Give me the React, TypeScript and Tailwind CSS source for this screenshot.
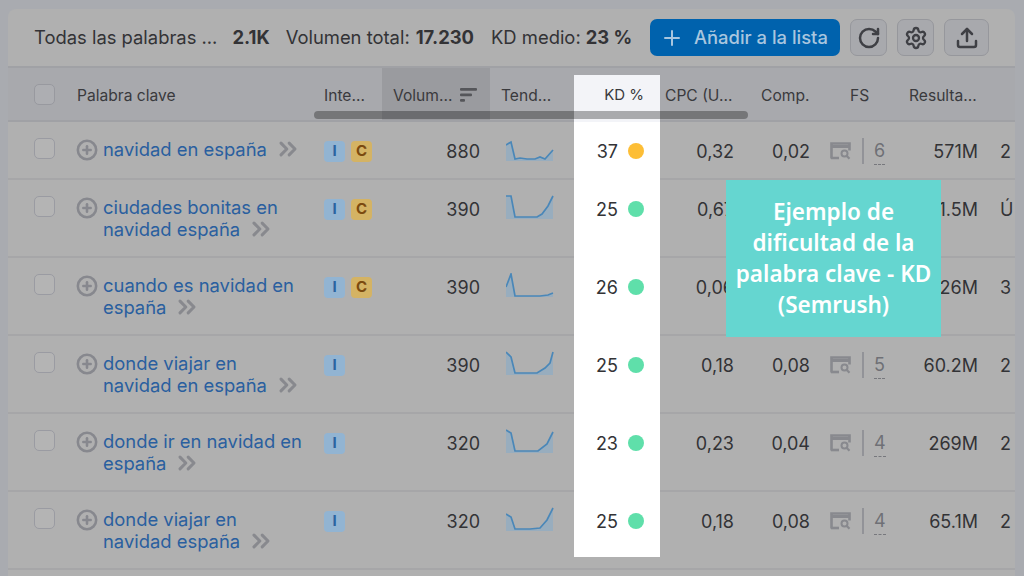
import { ChevronsRight, CirclePlus, Plus, RotateCw, Settings, Upload } from "lucide-react";

type Row = {
  lines: string[];
  intents: string[];
  volume: string;
  trend: string;
  kd: string;
  dot: string;
  cpc: string;
  comp: string;
  fs: string;
  results: string;
  last: string;
  tall: boolean;
  short?: boolean;
};

const rows: Row[] = [
  {
    lines: ["navidad en españa"],
    intents: ["I", "C"],
    volume: "880",
    trend: "0,8 5,5 9,22 14,21 21,22 29,22 34,20 39,22 47,13",
    kd: "37",
    dot: "bg-[#fdbe36]",
    cpc: "0,32",
    comp: "0,02",
    fs: "6",
    results: "571M",
    last: "2",
    tall: false,
  },
  {
    lines: ["ciudades bonitas en", "navidad españa"],
    intents: ["I", "C"],
    volume: "390",
    trend: "0,1 5,1 9,22 31,22 36,19 42,11 47,1",
    kd: "25",
    dot: "bg-[#5fdfaa]",
    cpc: "0,67",
    comp: "",
    fs: "",
    results: "21.5M",
    last: "Ú",
    tall: true,
  },
  {
    lines: ["cuando es navidad en", "españa"],
    intents: ["I", "C"],
    volume: "390",
    trend: "0,14 5,1 9,23 34,23 42,22 47,20",
    kd: "26",
    dot: "bg-[#5fdfaa]",
    cpc: "0,06",
    comp: "",
    fs: "",
    results: "126M",
    last: "3",
    tall: true,
  },
  {
    lines: ["donde viajar en", "navidad en españa"],
    intents: ["I"],
    volume: "390",
    trend: "0,1 5,6 9,22 31,22 39,17 44,12 47,1",
    kd: "25",
    dot: "bg-[#5fdfaa]",
    cpc: "0,18",
    comp: "0,08",
    fs: "5",
    results: "60.2M",
    last: "2",
    tall: true,
  },
  {
    lines: ["donde ir en navidad en", "españa"],
    intents: ["I"],
    volume: "320",
    trend: "0,1 5,4 9,22 32,22 41,15 47,3",
    kd: "23",
    dot: "bg-[#5fdfaa]",
    cpc: "0,23",
    comp: "0,04",
    fs: "4",
    results: "269M",
    last: "2",
    tall: true,
  },
  {
    lines: ["donde viajar en", "navidad españa"],
    intents: ["I"],
    volume: "320",
    trend: "0,7 5,10 9,22 24,22 34,21 41,13 47,1",
    kd: "25",
    dot: "bg-[#5fdfaa]",
    cpc: "0,18",
    comp: "0,08",
    fs: "4",
    results: "65.1M",
    last: "2",
    tall: true,
    short: true,
  },
];

function Checkbox() {
  return <div className="h-[21px] w-[21px] rounded-[5px] border border-[#9a9ba2] bg-[#b4b4b4]" />;
}

function Trend({ points }: { points: string }) {
  return (
    <svg width="48" height="24" viewBox="0 0 48 24" fill="none">
      <polygon points={`0,24 ${points} 47,24`} fill="#98adbe" />
      <polyline points={points} stroke="#4a87b8" strokeWidth="1.7" />
    </svg>
  );
}

function FsIcon() {
  return (
    <svg width="21" height="18" viewBox="0 0 21 18" fill="none">
      <path d="M1.5 16.5V1.5h18v7" stroke="#88898e" strokeWidth="2.6" />
      <path d="M1 4.5h19" stroke="#88898e" strokeWidth="3" />
      <path d="M1 16h8" stroke="#88898e" strokeWidth="2.6" />
      <circle cx="14.5" cy="11.5" r="3" stroke="#88898e" strokeWidth="2" />
      <path d="M16.8 14l2.7 2.7" stroke="#88898e" strokeWidth="2.2" />
    </svg>
  );
}

function KeywordRow({ row }: { row: Row }) {
  const last = row.lines.length - 1;
  return (
    <div
      className={`flex shrink-0 border-b-2 border-[#a6a6a8] ${row.tall ? "h-[78px]" : "h-[58px]"}`}
    >
      <div className="w-[69px] shrink-0 pl-[26px] pt-4">
        <Checkbox />
      </div>
      <div className="-ml-px flex w-[248px] shrink-0 pt-[17px]">
        <CirclePlus size={22} strokeWidth={2.8} className="mr-[5px] shrink-0 text-[#87888e]" />
        <div className="-mt-px text-[18.4px] leading-[22px] text-[#2a5f9f]">
          {row.lines.map((line, i) => (
            <div key={line} className="flex items-center whitespace-nowrap">
              {line}
              {i === last && (
                <ChevronsRight
                  size={28}
                  strokeWidth={2.6}
                  className="-my-[3px] ml-[7px] text-[#88898e]"
                />
              )}
            </div>
          ))}
        </div>
      </div>
      <div className="flex w-[58px] shrink-0 gap-[6px] pt-[19px]">
        {row.intents.map((intent) => (
          <div
            key={intent}
            className={`flex h-[21px] w-[21px] items-center justify-center rounded-[4px] text-[15px] font-bold ${
              intent === "I" ? "bg-[#92b4d2] text-[#2a64a0]" : "bg-[#d4b364] text-[#7b4a10]"
            }`}
          >
            {intent}
          </div>
        ))}
      </div>
      <div className="w-[108px] shrink-0 pr-[10px] pt-[19px] text-right text-[18px] leading-[22px] text-[#333336]">
        {row.volume}
      </div>
      <div className="w-[84px] shrink-0 pl-4 pt-[15px]">
        <Trend points={row.trend} />
      </div>
      <div
        className={`flex w-[86px] shrink-0 justify-end gap-[10px] bg-white pr-4 pt-[19px] ${
          row.short ? "h-[65px]" : "-mb-[2px]"
        }`}
      >
        <span className="text-[18px] leading-[22px] text-[#333336]">{row.kd}</span>
        <span className={`mt-[2px] h-4 w-4 rounded-full ${row.dot}`} />
      </div>
      <div className="w-[74px] shrink-0 pt-[19px] text-right text-[18px] leading-[22px] text-[#333336]">
        {row.cpc}
      </div>
      <div className="w-[76px] shrink-0 pt-[19px] text-right text-[18px] leading-[22px] text-[#333336]">
        {row.comp}
      </div>
      <div className="flex w-[80px] shrink-0 pl-[20px] pt-[16px]">
        <div className="mt-[4px]">
          <FsIcon />
        </div>
        <div className="ml-[11px] h-[26px] w-[2px] bg-[#929398]" />
        <span className="ml-[10px] h-[27px] border-b border-dashed border-[#77787d] text-[18px] leading-[26px] text-[#6f7076]">
          {row.fs}
        </span>
      </div>
      <div className="w-[88px] shrink-0 pt-[19px] text-right text-[18px] leading-[22px] text-[#333336]">
        {row.results}
      </div>
      <div className="w-[35px] shrink-0 overflow-hidden pl-[22px] pt-[19px] text-[18px] leading-[22px] text-[#333336]">
        {row.last}
      </div>
    </div>
  );
}

export default function App() {
  return (
    <div className="h-[576px] w-[1024px] overflow-hidden bg-[#a9abb0] pl-2 pr-[9px] pt-[9px] font-['Inter',sans-serif]">
      <div className="relative h-[567px] overflow-hidden rounded-t-[8px] bg-[#b0b0b0]">
        <div className="flex h-[57px] items-center pl-[26px] pr-[26px] text-[18.4px] text-[#333336]">
          <span>Todas las palabras ...</span>
          <span className="ml-[15px] font-bold">2.1K</span>
          <span className="ml-4">Volumen total:</span>
          <span className="ml-[6px] font-bold">17.230</span>
          <span className="ml-[17px]">KD medio:</span>
          <span className="ml-[5px] font-bold">23 %</span>
          <button
            type="button"
            className="ml-auto flex h-[37px] w-[190px] items-center rounded-[7px] bg-[#0062ad] pl-[10px] text-[18.4px] font-medium text-[#a9c6df]"
          >
            <Plus size={24} strokeWidth={2} className="mr-[10px]" />
            Añadir a la lista
          </button>
          <button
            type="button"
            className="ml-[10px] flex h-[37px] w-[37px] items-center justify-center rounded-[7px] border border-[#96979c] bg-[#a8a9ad] text-[#3f4045]"
          >
            <RotateCw size={24} strokeWidth={2.5} />
          </button>
          <button
            type="button"
            className="ml-[10px] flex h-[37px] w-[37px] items-center justify-center rounded-[7px] border border-[#96979c] bg-[#a8a9ad] text-[#3f4045]"
          >
            <Settings size={24} strokeWidth={2.3} />
          </button>
          <button
            type="button"
            className="ml-[10px] flex h-[37px] w-[45px] items-center justify-center rounded-[7px] border border-[#96979c] bg-[#a8a9ad] text-[#3f4045]"
          >
            <Upload size={24} strokeWidth={2.5} />
          </button>
        </div>

        <div className="flex h-[56px] items-center border-y-2 border-[#a0a1a5] bg-[#a8a9ad] text-[15.6px] text-[#3a3a3d]">
          <div className="w-[69px] shrink-0 pl-[26px]">
            <div className="h-[21px] w-[21px] rounded-[5px] border border-[#98999f] bg-[#adaeb2]" />
          </div>
          <div className="w-[247px] shrink-0 pt-1">Palabra clave</div>
          <div className="w-[58px] shrink-0 pt-1">Inte...</div>
          <div className="flex h-full w-[108px] shrink-0 items-center gap-[8px] bg-[#9a9b9f] pl-[11px] pt-[2px]">
            <span className="whitespace-nowrap pt-[2px]">Volum...</span>
            <svg width="17" height="14" viewBox="0 0 17 14" fill="#55565a">
              <rect x="0" y="0" width="17" height="2.8" rx="1" />
              <rect x="0" y="5.5" width="12" height="2.8" rx="1" />
              <rect x="0" y="11" width="5" height="2.8" rx="1" />
            </svg>
          </div>
          <div className="w-[84px] shrink-0 pl-[11px] pt-1">Tend...</div>
          <div className="mt-[9px] flex h-[47px] w-[86px] shrink-0 items-start justify-end bg-[#f3f4f8] pr-4 pt-[9px] text-[15px]">
            KD %
          </div>
          <div className="w-[90px] shrink-0 pl-[5px] pt-1">CPC (U...</div>
          <div className="w-[82px] shrink-0 pl-[11px] pt-1">Comp.</div>
          <div className="w-[68px] shrink-0 pl-[18px] pt-1">FS</div>
          <div className="flex-1 whitespace-nowrap pl-[9px] pt-1">Resulta...</div>
        </div>

        {rows.map((row) => (
          <KeywordRow key={row.lines.join(" ")} row={row} />
        ))}

        {/* scrollbar sits over the header */}
        <div className="absolute left-[306px] top-[102px] h-2 w-[434px] rounded-full bg-black/30" />

        <div className="absolute left-[718px] top-[171px] flex h-[157px] w-[215px] items-center justify-center bg-[#65d6d0] px-2 pb-[2px] text-center font-['Noto_Sans',sans-serif] text-[22.5px] font-semibold leading-[31px] text-white">
          Ejemplo de dificultad de la palabra clave - KD (Semrush)
        </div>
      </div>
    </div>
  );
}
